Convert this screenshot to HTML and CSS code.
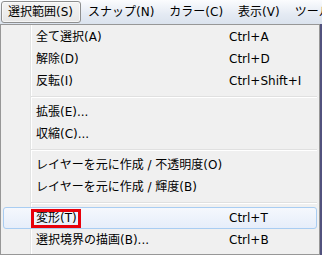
FILE: index.html
```html
<!DOCTYPE html>
<html lang="ja">

<head>
    <meta charset="UTF-8">
    <meta name="viewport" content="width=device-width, initial-scale=1.0">
    <title>選択範囲メニュー</title>
    <link rel="stylesheet" href="styles.css">
</head>

<body>
    <div class="menubar">
        <span class="bar-item open">選択範囲(S)</span>
        <span class="bar-item">スナップ(N)</span>
        <span class="bar-item">カラー(C)</span>
        <span class="bar-item">表示(V)</span>
        <span class="bar-item">ツール(T)</span>
    </div>

    <div class="menu">
        <div class="item"><span class="label">全て選択(A)</span><span class="key">Ctrl+A</span></div>
        <div class="item"><span class="label">解除(D)</span><span class="key">Ctrl+D</span></div>
        <div class="item"><span class="label">反転(I)</span><span class="key">Ctrl+Shift+I</span></div>
        <div class="sep"></div>
        <div class="item"><span class="label">拡張(E)...</span></div>
        <div class="item"><span class="label">収縮(C)...</span></div>
        <div class="sep"></div>
        <div class="item"><span class="label wide">レイヤーを元に作成 / 不透明度(O)</span></div>
        <div class="item"><span class="label wide">レイヤーを元に作成 / 輝度(B)</span></div>
        <div class="sep"></div>
        <div class="item hover"><span class="label"><span class="marked">変形(T)</span></span><span class="key">Ctrl+T</span></div>
        <div class="item"><span class="label">選択境界の描画(B)...</span><span class="key">Ctrl+B</span></div>
    </div>
</body>

</html>
```

FILE: styles.css
```css
body {
    margin: 0;
    width: 322px;
    height: 255px;
    overflow: hidden;
    background-color: #52527e;
    font-family: "DejaVu Sans", "Noto Sans CJK JP", sans-serif;
    font-size: 12px;
    color: #000;
}

.menubar {
    height: 24px;
    display: flex;
    align-items: center;
    padding-left: 1px;
    background: linear-gradient(#fbfcfe, #e4eaf3 60%, #dbe3ee);
    white-space: nowrap;
    overflow: hidden;
}

.bar-item {
    height: 22px;
    line-height: 21px;
    padding: 0 7px 0 6px;
    border: 1px solid transparent;
    border-radius: 3px;
    box-sizing: border-box;
}

.bar-item.open {
    border-color: #8e8f8f;
    background: linear-gradient(#f4f4f4, #e6e6e6);
    box-shadow: inset 0 0 0 1px rgba(255, 255, 255, 0.6);
}

.menu {
    width: 318px;
    height: 228px;
    border: 1px solid #979797;
    padding: 1px 0 0;
    box-sizing: content-box;
    background: linear-gradient(to right, #f0f0f0 29px, #e2e3e3 29px, #e2e3e3 30px, #ffffff 30px, #ffffff 31px, #f0f0f0 31px);
    box-shadow: 0 2px 0 #6d6d6d;
}

.item {
    height: 22px;
    margin: 0 2px;
    padding-left: 32px;
    border: 1px solid transparent;
    border-radius: 3px;
    box-sizing: border-box;
    display: flex;
    line-height: 20px;
    white-space: nowrap;
}

.item.hover {
    border-color: #a9cdf2;
    background: linear-gradient(#f5f8fd, #e6eefa);
}

.label {
    width: 193px;
}

.label.wide {
    width: auto;
}

.marked {
    position: relative;
}

.marked::after {
    content: "";
    position: absolute;
    left: -5px;
    right: -4px;
    top: -2px;
    bottom: -3px;
    border: 3px solid #e8000b;
}

.sep {
    height: 9px;
    margin-left: 30px;
    margin-right: 2px;
    display: flex;
    flex-direction: column;
    justify-content: center;
}

.sep::before {
    content: "";
    height: 1px;
    background-color: #e0e0e0;
    border-bottom: 1px solid #ffffff;
}
```
